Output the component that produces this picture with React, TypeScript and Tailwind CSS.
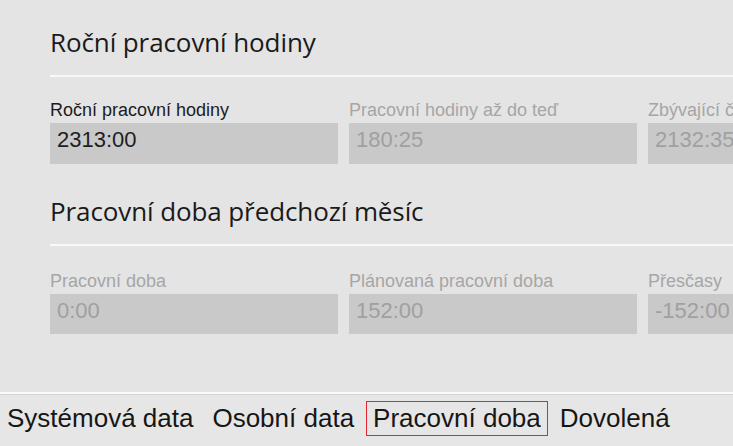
import React from "react";

type Field = { label: string; value: string; active?: boolean };

const Section = ({
  title,
  fields,
  headTop,
  labelTop,
  inputH,
}: {
  title: string;
  fields: Field[];
  headTop: string;
  labelTop: string;
  inputH: string;
}) => (
  <div className={`flex flex-col ${headTop}`}>
    <h2 className="text-[26px] leading-[27px] tracking-[-0.1px] text-[#1a1a1a] font-['Open_Sans',sans-serif] font-normal whitespace-nowrap">
      {title}
    </h2>
    <div className="mt-[19px] h-[2px] bg-[#f8f8f8]" />
    <div className={`grid grid-cols-[288px_288px_288px] gap-x-[11px] ${labelTop}`}>
      {fields.map((f) => (
        <div key={f.label} className="flex flex-col">
          <div
            className={`text-[18px] leading-[18px] whitespace-nowrap font-['Liberation_Sans',Arial,sans-serif] ${
              f.active ? "text-[#1c1c1c]" : "text-[#a6a6a6]"
            }`}
          >
            {f.label}
          </div>
          <div
            className={`mt-[4px] ${inputH} bg-[#c9c9c9] pl-[7px] pt-[6px] text-[22px] leading-[22px] whitespace-nowrap font-['Liberation_Sans',Arial,sans-serif] ${
              f.active ? "text-[#1e1e1e]" : "text-[#a0a0a0]"
            }`}
          >
            {f.value}
          </div>
        </div>
      ))}
    </div>
  </div>
);

export default function App() {
  const tabs = ["Systémová data", "Osobní data", "Pracovní doba", "Dovolená"];
  return (
    <div className="w-[733px] h-[446px] bg-[#e4e4e4] overflow-hidden flex flex-col">
      <div className="h-[392px] pl-[50px] overflow-hidden">
        <Section
          title="Roční pracovní hodiny"
          headTop="pt-[29px]"
          labelTop="mt-[24px]"
          inputH="h-[41px]"
          fields={[
            { label: "Roční pracovní hodiny", value: "2313:00", active: true },
            { label: "Pracovní hodiny až do teď", value: "180:25" },
            { label: "Zbývající čas", value: "2132:35" },
          ]}
        />
        <Section
          title="Pracovní doba předchozí měsíc"
          headTop="mt-[34px]"
          labelTop="mt-[26px]"
          inputH="h-[40px]"
          fields={[
            { label: "Pracovní doba", value: "0:00" },
            { label: "Plánovaná pracovní doba", value: "152:00" },
            { label: "Přesčasy", value: "-152:00" },
          ]}
        />
      </div>
      <div className="h-[2px] bg-[#fafafa]" />
      <div className="h-[1px] bg-[#d6d6d6]" />
      <div className="flex-1 bg-[#e6e6e6] flex items-start gap-[5px] pt-[6px]">
        {tabs.map((t) => (
          <div
            key={t}
            className={
              t === "Pracovní doba"
                ? "border border-solid border-[#e3262f] px-[6px] pt-[3px] pb-[4px] text-[26px] leading-[26px] whitespace-nowrap text-[#161616] font-['Liberation_Sans',Arial,sans-serif]"
                : "border border-solid border-transparent px-[6px] pt-[3px] pb-[4px] text-[26px] leading-[26px] whitespace-nowrap text-[#161616] font-['Liberation_Sans',Arial,sans-serif]"
            }
          >
            {t}
          </div>
        ))}
      </div>
    </div>
  );
}
